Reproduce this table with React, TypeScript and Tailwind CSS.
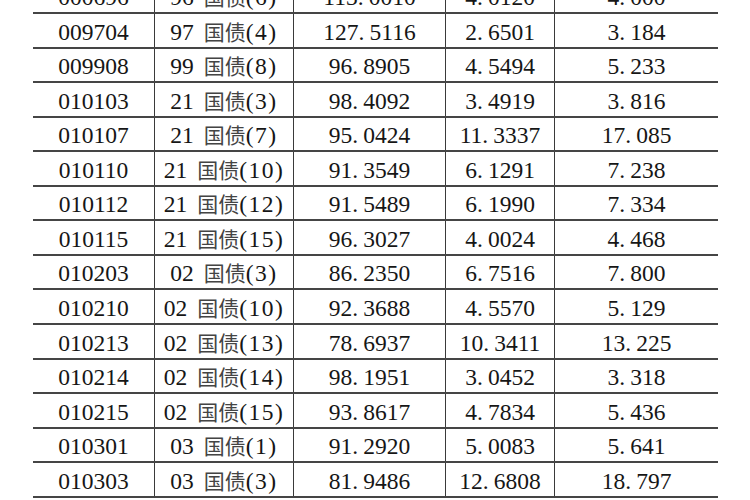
import React from "react";

type Row = [string, string, string, string, string, string];

const rows: Row[] = [
  ["000696", "96", "(6)", "113.0010", "4.0120", "4.000"],
  ["009704", "97", "(4)", "127.5116", "2.6501", "3.184"],
  ["009908", "99", "(8)", "96.8905", "4.5494", "5.233"],
  ["010103", "21", "(3)", "98.4092", "3.4919", "3.816"],
  ["010107", "21", "(7)", "95.0424", "11.3337", "17.085"],
  ["010110", "21", "(10)", "91.3549", "6.1291", "7.238"],
  ["010112", "21", "(12)", "91.5489", "6.1990", "7.334"],
  ["010115", "21", "(15)", "96.3027", "4.0024", "4.468"],
  ["010203", "02", "(3)", "86.2350", "6.7516", "7.800"],
  ["010210", "02", "(10)", "92.3688", "4.5570", "5.129"],
  ["010213", "02", "(13)", "78.6937", "10.3411", "13.225"],
  ["010214", "02", "(14)", "98.1951", "3.0452", "3.318"],
  ["010215", "02", "(15)", "93.8617", "4.7834", "5.436"],
  ["010301", "03", "(1)", "91.2920", "5.0083", "5.641"],
  ["010303", "03", "(3)", "81.9486", "12.6808", "18.797"],
];

function Num({ v }: { v: string }) {
  const [a, b] = v.split(".");
  return (
    <span className="whitespace-nowrap">
      {a}
      <span className="inline-block w-[11px] text-left">.</span>
      {b}
    </span>
  );
}

export default function App() {
  return (
    <div className="w-[750px] h-[500px] overflow-hidden bg-white font-[Liberation_Serif,Noto_Sans_CJK_SC,serif]">
      <div className="mt-[-20.6px] ml-[33px] w-[685px] text-[23.5px] text-[#161616]">
        {rows.map((r, i) => (
          <div
            key={i}
            className="grid grid-cols-[121px_139px_152px_109px_164px] h-[34.57px] border-b-2 border-[#454545]"
          >
            <div className="flex items-center justify-center pt-[4px] leading-none">
              {r[0]}
            </div>
            <div className="flex items-center justify-center pt-[4px] leading-none border-l-[1.5px] border-[#3a3a3a]">
              <span className="whitespace-nowrap">
                {r[1]}
                <span className="ml-[10px] font-[Noto_Sans_CJK_SC,sans-serif] text-[21px] text-[#444]">
                  国债
                </span>
                <span className="tracking-[1.5px]">{r[2]}</span>
              </span>
            </div>
            <div className="flex items-center justify-center pt-[4px] leading-none border-l-[1.5px] border-[#3a3a3a]">
              <Num v={r[3]} />
            </div>
            <div className="flex items-center justify-center pt-[4px] leading-none border-l-[1.5px] border-[#3a3a3a]">
              <Num v={r[4]} />
            </div>
            <div className="flex items-center justify-center pt-[4px] leading-none border-l-[1.5px] border-[#3a3a3a]">
              <Num v={r[5]} />
            </div>
          </div>
        ))}
      </div>
    </div>
  );
}
